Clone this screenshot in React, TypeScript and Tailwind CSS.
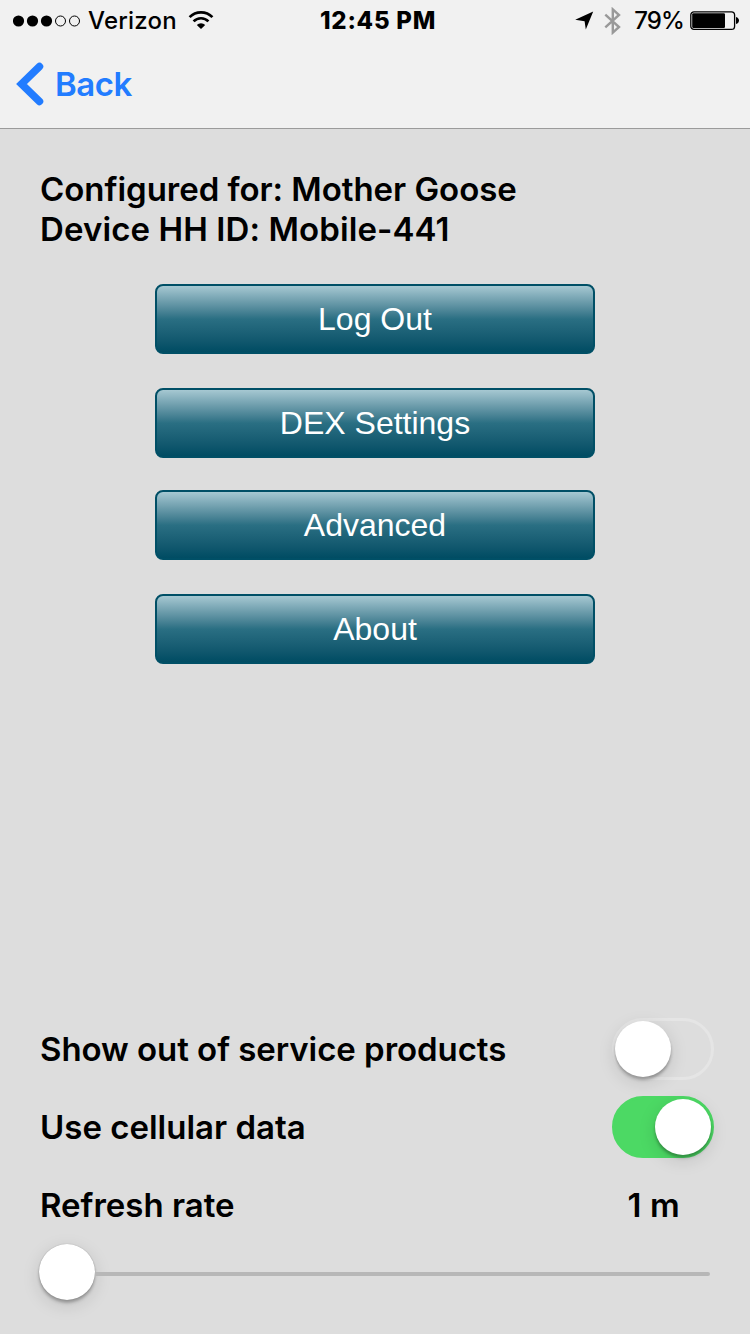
import { useState } from "react";
import clsx from "clsx";

const MENU = [
  { label: "Log Out", className: "" },
  { label: "DEX Settings", className: "mt-[34px]" },
  { label: "Advanced", className: "mt-8" },
  { label: "About", className: "mt-[34px]" },
];

function StatusBar() {
  return (
    <div className="grid h-[41px] grid-cols-[300px_156px_1fr] items-center pr-[11px] pl-[13px] text-[24px] leading-10 text-black">
      <div className="flex items-center">
        <svg width="68" height="12" viewBox="0 0 68 12" className="shrink-0">
          {[5.5, 19.5, 33.5].map((cx) => (
            <circle key={cx} cx={cx} cy="6" r="5.6" />
          ))}
          {[47.5, 61.5].map((cx) => (
            <circle key={cx} cx={cx} cy="6" r="5" fill="none" stroke="#000" strokeWidth="1" />
          ))}
        </svg>
        <span className="ml-[7px] pt-px font-medium tracking-[0.2px]">Verizon</span>
        <svg width="26" height="20" viewBox="0 0 26 20" className="-mt-px ml-[11px] shrink-0" fill="none" stroke="#000" strokeWidth="2.7">
          <path d="M1.6 7.1 A16 16 0 0 1 24.4 7.1" />
          <path d="M5.6 11.4 A10.3 10.3 0 0 1 20.4 11.4" />
          <path d="M13 19 L8.8 14.9 A6 6 0 0 1 17.2 14.9 Z" fill="#000" stroke="none" />
        </svg>
      </div>
      <span className="pt-px pl-[7px] font-extrabold tracking-[0.75px] whitespace-nowrap">12:45 PM</span>
      <div className="flex items-center justify-end">
        <svg width="19" height="19" viewBox="0 0 19 19" className="shrink-0">
          <path d="M18.2 0.5 L10.8 18.6 L9.6 10.2 L0.2 8.7 Z" />
        </svg>
        <svg width="18" height="28" viewBox="0 0 18 28" className="ml-[10px] shrink-0" fill="none" stroke="#999" strokeWidth="2.4">
          <path d="M1.3 7.6 L15 20 L8.8 25.6 V2.4 L15 8 L1.3 20.4" />
        </svg>
        <span className="ml-3 pt-px font-medium tracking-[-0.9px]">79%</span>
        <svg width="49" height="20" viewBox="0 0 49 20" className="ml-1.5 shrink-0">
          <rect x="0.8" y="0.8" width="43.8" height="17.6" rx="3.2" fill="none" stroke="#000" strokeWidth="1.3" />
          <rect x="2.2" y="2.2" width="32.8" height="14.8" rx="1.2" />
          <path d="M46 6 C48 6.5 49 8 49 9.5 C49 11 48 12.5 46 13 Z" />
        </svg>
      </div>
    </div>
  );
}

function Toggle({ on, onChange }: { on: boolean; onChange: (on: boolean) => void }) {
  return (
    <button
      role="switch"
      aria-checked={on}
      onClick={() => onChange(!on)}
      className={clsx(
        "flex h-[62px] w-[102px] shrink-0 items-center rounded-full border-[3px]",
        on ? "justify-end border-[#4cd964] bg-[#4cd964]" : "border-[#e5e5e5]",
      )}
    >
      <span className="size-14 rounded-full bg-white shadow-[0_3px_3px_rgba(0,0,0,0.28),0_5px_18px_rgba(0,0,0,0.13)]" />
    </button>
  );
}

export default function App() {
  const [showOutOfService, setShowOutOfService] = useState(false);
  const [useCellular, setUseCellular] = useState(true);

  return (
    <div className="flex h-[1334px] w-[750px] flex-col overflow-hidden bg-[#ddd] font-['Inter',sans-serif] text-black">
      <header className="h-[129px] shrink-0 border-b border-[#9b9b9b] bg-[#f1f1f1]">
        <StatusBar />
        <button className="flex h-[86px] items-center pl-4 text-[33px] font-semibold text-[#227cff]">
          <svg width="28" height="44" viewBox="0 0 28 44" fill="none" stroke="#227cff" strokeWidth="7.5">
            <path d="M23.5 4.5 L5.5 22 L23.5 39.5" strokeLinecap="round" />
          </svg>
          <span className="ml-[11px] pt-0.5 tracking-[-0.5px]">Back</span>
        </button>
      </header>

      <main className="flex flex-1 flex-col">
        <div className="mt-10 pl-10 text-[33px] leading-10 font-semibold">
          <p className="tracking-[-0.04px]">Configured for: Mother Goose</p>
          <p className="tracking-[0.1px]">Device HH ID: Mobile-441</p>
        </div>

        <nav className="mt-[35px] flex flex-col items-center">
          {MENU.map((item) => (
            <button
              key={item.label}
              className={clsx(
                "h-[70px] w-[440px] rounded-lg border-2 border-[#004f66] bg-linear-to-b from-[#a6c8d2] via-[#2a6f83] to-[#004c63] font-['Liberation_Sans',Arial,sans-serif] text-[32px] text-white",
                item.className,
              )}
            >
              {item.label}
            </button>
          ))}
        </nav>

        <section className="mt-auto h-[316px] pr-9 pl-10 text-[33px] font-semibold">
          <div className="flex h-[62px] items-center justify-between">
            <span className="pt-0.5 tracking-[-0.05px]">Show out of service products</span>
            <Toggle on={showOutOfService} onChange={setShowOutOfService} />
          </div>
          <div className="mt-4 flex h-[62px] items-center justify-between">
            <span className="pt-0.5">Use cellular data</span>
            <Toggle on={useCellular} onChange={setUseCellular} />
          </div>
          <div className="mt-4 flex h-[62px] items-center justify-between pr-[34px]">
            <span className="pt-0.5">Refresh rate</span>
            <span className="pt-0.5 tracking-[0.2px]">1 m</span>
          </div>
          <div className="mt-2 -ml-px flex h-14 items-center">
            <span className="size-14 shrink-0 rounded-full bg-white shadow-[0_0_1px_rgba(0,0,0,0.35),0_3px_3px_rgba(0,0,0,0.25),0_5px_18px_rgba(0,0,0,0.13)]" />
            <span className="mt-1 mr-1 h-1 flex-1 rounded-r-full bg-[#b7b7b7]" />
          </div>
        </section>
      </main>
    </div>
  );
}
